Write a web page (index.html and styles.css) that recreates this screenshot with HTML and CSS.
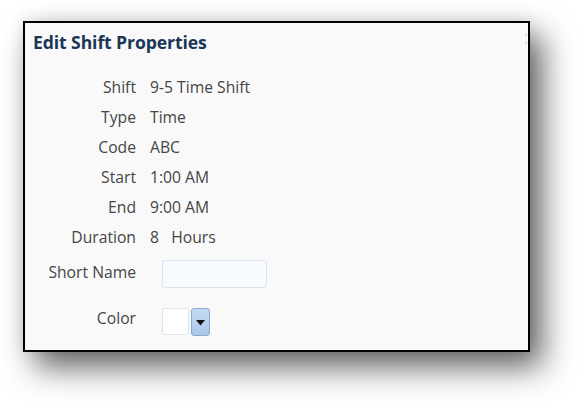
FILE: index.html
```html
<!DOCTYPE html>
<html>
<head>
<meta charset="utf-8">
<link rel="stylesheet" href="styles.css">
</head>
<body>
<div class="panel">
  <span class="dot dot-a"></span><span class="dot dot-b"></span>
  <h1 class="title">Edit Shift Properties</h1>
  <div class="form">
    <div class="row"><span class="label">Shift</span><span class="value">9-5 Time Shift</span></div>
    <div class="row"><span class="label">Type</span><span class="value">Time</span></div>
    <div class="row"><span class="label">Code</span><span class="value">ABC</span></div>
    <div class="row"><span class="label">Start</span><span class="value">1:00 AM</span></div>
    <div class="row"><span class="label">End</span><span class="value">9:00 AM</span></div>
    <div class="row"><span class="label">Duration</span><span class="value">8&nbsp;&nbsp; Hours</span></div>
    <div class="row row-input"><span class="label">Short Name</span><input class="text-input" type="text"></div>
    <div class="row row-color"><span class="label">Color</span><span class="swatch"></span><span class="drop"><svg width="9" height="6" viewBox="0 0 9 6"><path d="M0 0 H9 L4.5 5.5 Z" fill="#111"/></svg></span></div>
  </div>
</div>
</body>
</html>
```
FILE: styles.css
```css
html, body {
  margin: 0;
  padding: 0;
  background: #ffffff;
}
body {
  width: 584px;
  height: 405px;
  overflow: hidden;
  font-family: "Open Sans", "DejaVu Sans", sans-serif;
}
.panel {
  position: relative;
  box-sizing: border-box;
  margin: 21px 0 0 23px;
  width: 507px;
  height: 331px;
  border: 2px solid #000;
  background: #f9f9f9;
  box-shadow: 12px 15px 30px rgba(0,0,0,0.62), 0 -2px 14px rgba(0,0,0,0.08);
  padding: 9px 0 0 8px;
}
.dot {
  position: absolute;
  right: 1px;
  width: 2px;
  height: 2px;
  border-radius: 50%;
  background: #d0d0d0;
}
.dot-a { top: 11px; }
.dot-b { top: 19px; }
.title {
  margin: 0;
  font-size: 17.6px;
  line-height: 20px;
  font-weight: 700;
  color: #1a3656;
  letter-spacing: -0.1px;
}
.form {
  margin: 20px 0 0 -8px;
}
.row {
  display: flex;
  align-items: center;
  height: 30px;
  font-size: 15.7px;
  color: #454545;
}
.label {
  width: 111px;
  text-align: right;
  margin-right: 14px;
  flex: none;
}
.row-input {
  height: 28px;
  margin-top: 8px;
  align-items: flex-start;
}
.row-input .label {
  line-height: 24px;
}
.text-input {
  box-sizing: border-box;
  margin: 0 0 0 12px;
  width: 105px;
  height: 28px;
  border: 1px solid #dbe4ec;
  border-radius: 3px;
  background: #f7faff;
  outline: none;
  padding: 0;
}
.row-color {
  height: 28px;
  margin-top: 20px;
  align-items: flex-start;
}
.row-color .label {
  line-height: 20px;
}
.swatch {
  box-sizing: border-box;
  margin-left: 12px;
  width: 27px;
  height: 27px;
  border: 1px solid #dde3ea;
  border-radius: 3px;
  background: #fff;
}
.drop {
  box-sizing: border-box;
  margin-left: 2px;
  width: 19px;
  height: 28px;
  border: 1px solid #86aad3;
  border-radius: 3px;
  background: linear-gradient(#c4daf2, #abc8ea);
  display: flex;
  align-items: center;
  justify-content: center;
}
.drop svg { display: block; margin-top: 1px; }
```
